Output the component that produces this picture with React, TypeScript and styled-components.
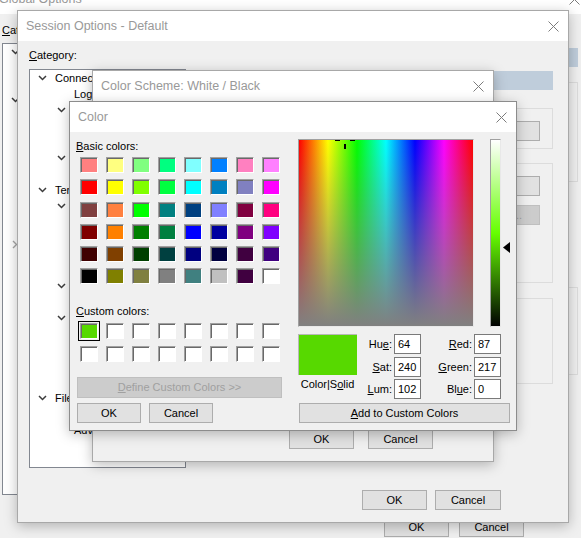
import styled, { createGlobalStyle } from 'styled-components';

const GlobalStyle = createGlobalStyle`
  html, body {
    margin: 0;
    padding: 0;
    background: #f0f0f0;
  }
  body {
    font-family: "Liberation Sans", Arial, sans-serif;
    font-size: 11px;
    color: #000;
  }
  * {
    box-sizing: border-box;
  }
`;

const Desktop = styled.div`
  position: relative;
  width: 581px;
  height: 538px;
  overflow: hidden;
  background: #f0f0f0;
`;

const Window = styled.div<{ $x: number; $y: number; $w: number; $h: number; $active?: boolean }>`
  position: absolute;
  left: ${(p) => p.$x}px;
  top: ${(p) => p.$y}px;
  width: ${(p) => p.$w}px;
  height: ${(p) => p.$h}px;
  display: flex;
  flex-direction: column;
  background: #f0f0f0;
  border: 1px solid ${(p) => (p.$active ? '#8c8c8c' : '#a8a8a8')};
  box-shadow: 0 3px 12px rgba(0, 0, 0, 0.26);
`;

const TitleBar = styled.div`
  flex: none;
  height: 30px;
  display: flex;
  align-items: center;
  justify-content: space-between;
  padding: 0 9px 0 8px;
  background: #fff;
`;

const TitleText = styled.span`
  font-size: 12.5px;
  color: #999;
  white-space: nowrap;
`;

const Key = styled.span`
  text-decoration: underline;
`;

const Button = styled.button<{ $w: number; $h?: number }>`
  width: ${(p) => p.$w}px;
  height: ${(p) => p.$h ?? 20}px;
  flex: none;
  padding: 0;
  border: 1px solid #adadad;
  background: #e1e1e1;
  font: inherit;
  color: #000;
  white-space: nowrap;

  &:disabled {
    background: #cccccc;
    border-color: #bfbfbf;
    color: #a0a0a0;
  }
`;

/* ---------- generic dialog parts ---------- */

const Body = styled.div<{ $pad: string }>`
  flex: 1;
  display: flex;
  flex-direction: column;
  padding: ${(p) => p.$pad};
  min-height: 0;
`;

const Columns = styled.div<{ $gap: number }>`
  flex: 1;
  display: flex;
  gap: ${(p) => p.$gap}px;
  min-height: 0;
`;

const LeftCol = styled.div<{ $w: number }>`
  width: ${(p) => p.$w}px;
  flex: none;
  display: flex;
  flex-direction: column;
`;

const RightCol = styled.div<{ $top: number }>`
  flex: 1;
  display: flex;
  flex-direction: column;
  padding-top: ${(p) => p.$top}px;
  min-width: 0;
`;

const Caption = styled.div`
  height: 14px;
  line-height: 14px;
  white-space: nowrap;
`;

const Footer = styled.div<{ $top: number; $right: number; $gap: number }>`
  flex: none;
  display: flex;
  justify-content: flex-end;
  gap: ${(p) => p.$gap}px;
  margin-top: ${(p) => p.$top}px;
  padding-right: ${(p) => p.$right}px;
`;

const Filler = styled.div`
  flex: 1;
`;

/* ---------- tree view ---------- */

const TreeBox = styled.div<{ $h: number; $top: number; $shift?: number }>`
  height: ${(p) => p.$h}px;
  margin-top: ${(p) => p.$top}px;
  background: #fff;
  border: 1px solid #828790;
  padding-left: ${(p) => p.$shift ?? 0}px;
  overflow: hidden;
`;

const TreeRow = styled.div<{ $level: number }>`
  height: 16px;
  display: flex;
  align-items: center;
  padding-left: ${(p) => p.$level * 19}px;
  white-space: nowrap;
`;

const Toggle = styled.span`
  width: 24px;
  margin-right: 1px;
  flex: none;
  display: flex;
  align-items: center;
  justify-content: center;
`;

const PanelBar = styled.div`
  height: 19px;
  flex: none;
  background: #bfcddb;
  padding-left: 6px;
  line-height: 19px;
  font-weight: bold;
  color: #1e2b3a;
  white-space: nowrap;
  overflow: hidden;
`;

const GroupBox = styled.div<{ $h: number; $top: number }>`
  height: ${(p) => p.$h}px;
  margin-top: ${(p) => p.$top}px;
  flex: none;
  border: 1px solid #dcdcdc;
  padding: 12px 12px 0 0;
  display: flex;
  flex-direction: column;
  align-items: flex-end;
  gap: 9px;
`;

/* ---------- color dialog ---------- */

const ColorBody = styled.div`
  flex: 1;
  display: flex;
  padding: 7px 6px 0 0;
`;

const LeftPane = styled.div`
  width: 228px;
  flex: none;
  padding-left: 7px;
  display: flex;
  flex-direction: column;
`;

const PaneLabel = styled(Caption)<{ $top?: number }>`
  margin-top: ${(p) => p.$top ?? 0}px;
  margin-left: -1px;
`;

const SwatchGrid = styled.div<{ $rowGap: number; $top: number }>`
  display: grid;
  grid-template-columns: repeat(8, 18px);
  grid-auto-rows: 16px;
  column-gap: 8px;
  row-gap: ${(p) => p.$rowGap}px;
  margin: ${(p) => p.$top}px 0 0 3px;
`;

const Swatch = styled.div<{ $c: string; $selected?: boolean }>`
  background: ${(p) => p.$c};
  border: 1px solid;
  border-color: #a0a0a0 #ffffff #ffffff #a0a0a0;
  box-shadow: inset 1px 1px 0 #696969;
  ${(p) => (p.$selected ? 'outline: 1px solid #000; outline-offset: 1px;' : '')}
`;

const ButtonRow = styled.div<{ $top: number }>`
  display: flex;
  gap: 8px;
  margin-top: ${(p) => p.$top}px;
`;

const RightPane = styled.div`
  width: 212px;
  flex: none;
  display: flex;
  flex-direction: column;
`;

const PickerRow = styled.div`
  display: flex;
  gap: 16px;
  height: 188px;
`;

const Spectrum = styled.div`
  position: relative;
  width: 176px;
  height: 188px;
  border: 1px solid;
  border-color: #a0a0a0 #e8e8e8 #e8e8e8 #a0a0a0;
  overflow: hidden;
  background:
    linear-gradient(to bottom, rgba(128, 128, 128, 0), #808080),
    linear-gradient(to right, #ff0000, #ffff00, #00ff00, #00ffff, #0000ff, #ff00ff, #ff0000);
`;

const Cross = styled.svg`
  position: absolute;
`;

const LumWrap = styled.div`
  position: relative;
  width: 11px;
`;

const LumBar = styled.div<{ $mid: string }>`
  width: 11px;
  height: 188px;
  border: 1px solid;
  border-color: #a0a0a0 #e8e8e8 #e8e8e8 #a0a0a0;
  background: linear-gradient(to bottom, #ffffff, ${(p) => p.$mid}, #000000);
`;

const LumArrow = styled.svg`
  position: absolute;
  left: 13px;
`;

const InfoRow = styled.div`
  display: flex;
  margin-top: 7px;
`;

const PreviewCol = styled.div`
  width: 59px;
  flex: none;
  display: flex;
  flex-direction: column;
  align-items: center;
`;

const Preview = styled.div<{ $c: string }>`
  width: 59px;
  height: 41px;
  background: ${(p) => p.$c};
  border-top: 1px solid #b8b8b8;
  border-left: 1px solid #b8b8b8;
`;

const PreviewLabel = styled(Caption)`
  margin-top: 2px;
`;

const FieldGrid = styled.div`
  display: grid;
  grid-template-columns: 35px 27px 49px 27px;
  grid-auto-rows: 20px;
  column-gap: 2px;
  row-gap: 2.5px;
`;

const FieldLabel = styled.label`
  align-self: center;
  text-align: right;
  white-space: nowrap;
`;

const Field = styled.input`
  width: 27px;
  height: 20px;
  border: 1px solid #7a7a7a;
  background: #fff;
  padding: 0 0 0 3px;
  font: inherit;
  color: #000;
  outline: none;
`;

const WideButton = styled(Button)`
  margin: 4px 0 0 1px;
`;

/* ---------- data ---------- */

const basicColors = [
  ['#ff8080', '#ffff80', '#80ff80', '#00ff80', '#80ffff', '#0080ff', '#ff80c0', '#ff80ff'],
  ['#ff0000', '#ffff00', '#80ff00', '#00ff40', '#00ffff', '#0080c0', '#8080c0', '#ff00ff'],
  ['#804040', '#ff8040', '#00ff00', '#008080', '#004080', '#8080ff', '#800040', '#ff0080'],
  ['#800000', '#ff8000', '#008000', '#008040', '#0000ff', '#0000a0', '#800080', '#8000ff'],
  ['#400000', '#804000', '#004000', '#004040', '#000080', '#000040', '#400040', '#400080'],
  ['#000000', '#808000', '#808040', '#808080', '#408080', '#c0c0c0', '#400040', '#ffffff'],
].flat();

const customColors = ['#57d900', ...Array(15).fill('#ffffff')];

type Node = { level: number; kind: 'open' | 'leaf' | 'closed'; text: string };

const sessionTree: Node[] = [
  { level: 0, kind: 'open', text: 'Connection' },
  { level: 1, kind: 'leaf', text: 'Logon Actions' },
  { level: 1, kind: 'open', text: 'SSH2' },
  { level: 2, kind: 'leaf', text: 'SFTP Session' },
  { level: 2, kind: 'leaf', text: 'Advanced' },
  { level: 1, kind: 'open', text: 'Port Forwarding' },
  { level: 2, kind: 'leaf', text: 'Remote/X11' },
  { level: 0, kind: 'open', text: 'Terminal' },
  { level: 1, kind: 'open', text: 'Emulation' },
  { level: 2, kind: 'leaf', text: 'Modes' },
  { level: 2, kind: 'leaf', text: 'Emacs' },
  { level: 2, kind: 'leaf', text: 'Mapped Keys' },
  { level: 2, kind: 'leaf', text: 'Advanced' },
  { level: 1, kind: 'open', text: 'Appearance' },
  { level: 2, kind: 'leaf', text: 'Window' },
  { level: 1, kind: 'open', text: 'Log File' },
  { level: 2, kind: 'leaf', text: 'Advanced' },
  { level: 1, kind: 'leaf', text: 'Printing' },
  { level: 1, kind: 'leaf', text: 'X/Y/Zmodem' },
  { level: 1, kind: 'leaf', text: 'Triggers' },
  { level: 0, kind: 'open', text: 'File Transfer' },
  { level: 1, kind: 'leaf', text: 'FTP/SFTP' },
  { level: 1, kind: 'leaf', text: 'Advanced' },
];

const globalTree: Node[] = [
  { level: 0, kind: 'open', text: 'General' },
  { level: 1, kind: 'leaf', text: 'Default Session' },
  { level: 1, kind: 'leaf', text: 'Edit Default Settings' },
  { level: 0, kind: 'open', text: 'Terminal' },
  { level: 1, kind: 'leaf', text: 'Appearance' },
  { level: 1, kind: 'leaf', text: 'Tabs' },
  { level: 1, kind: 'leaf', text: 'Advanced' },
  { level: 1, kind: 'leaf', text: 'Web Browser' },
  { level: 1, kind: 'leaf', text: 'Log File' },
  { level: 1, kind: 'leaf', text: 'Printing' },
  { level: 1, kind: 'leaf', text: 'Firewall' },
  { level: 1, kind: 'leaf', text: 'Toolbar' },
  { level: 0, kind: 'closed', text: 'SSH2' },
];

const picked = { hue: 64, sat: 240, lum: 102, red: 87, green: 217, blue: 0 };

/* ---------- small drawings ---------- */

const CloseIcon = () => (
  <svg width="11" height="11" viewBox="0 0 11 11">
    <path d="M0.5 0.5 L10.5 10.5 M10.5 0.5 L0.5 10.5" stroke="#7c7c7c" strokeWidth="1" fill="none" />
  </svg>
);

const Chevron = ({ kind }: { kind: Node['kind'] }) => {
  if (kind === 'leaf') return null;
  if (kind === 'closed')
    return (
      <svg width="6" height="9" viewBox="0 0 6 9">
        <path d="M1 1 L4.5 4.5 L1 8" stroke="#a6a6a6" strokeWidth="1.4" fill="none" />
      </svg>
    );
  return (
    <svg width="9" height="6" viewBox="0 0 9 6">
      <path d="M1 1 L4.5 4.5 L8 1" stroke="#3c3c3c" strokeWidth="1.5" fill="none" />
    </svg>
  );
};

const Tree = ({ nodes, h, top, shift }: { nodes: Node[]; h: number; top: number; shift?: number }) => (
  <TreeBox $h={h} $top={top} $shift={shift}>
    {nodes.map((n, i) => (
      <TreeRow key={i} $level={n.level}>
        <Toggle>
          <Chevron kind={n.kind} />
        </Toggle>
        {n.text}
      </TreeRow>
    ))}
  </TreeBox>
);

const Title = ({ text }: { text: string }) => (
  <TitleBar>
    <TitleText>{text}</TitleText>
    <CloseIcon />
  </TitleBar>
);

/* ---------- windows ---------- */

const GlobalOptions = () => (
  <Window $x={-10} $y={-17} $w={600} $h={567}>
    <Title text="Global Options" />
    <Body $pad="9px 11px 12px 11px">
      <Columns $gap={12}>
        <LeftCol $w={175}>
          <Caption>
            <Key>C</Key>ategory:
          </Caption>
          <Tree nodes={globalTree} h={452} top={6} shift={-2} />
        </LeftCol>
        <RightCol $top={25}>
          <PanelBar>General</PanelBar>
          <GroupBox $h={100} $top={15} />
          <GroupBox $h={88} $top={105} />
        </RightCol>
      </Columns>
      <Footer $top={22} $right={54} $gap={10}>
        <Button $w={65}>OK</Button>
        <Button $w={65}>Cancel</Button>
      </Footer>
    </Body>
  </Window>
);

const SessionOptions = () => (
  <Window $x={17} $y={10} $w={552} $h={513}>
    <Title text="Session Options - Default" />
    <Body $pad="7px 15px 12px 11px">
      <Columns $gap={11}>
        <LeftCol $w={157}>
          <Caption>
            <Key>C</Key>ategory:
          </Caption>
          <Tree nodes={sessionTree} h={399} top={7} />
        </LeftCol>
        <RightCol $top={23}>
          <PanelBar>Window and Text Appearance</PanelBar>
          <GroupBox $h={41} $top={18}>
            <Button $w={80}>Edit...</Button>
          </GroupBox>
          <GroupBox $h={120} $top={14}>
            <Button $w={80}>Font...</Button>
            <Button $w={80} disabled>
              Narrow...
            </Button>
          </GroupBox>
          <GroupBox $h={86} $top={15} />
        </RightCol>
      </Columns>
      <Footer $top={22} $right={52} $gap={8}>
        <Button $w={65}>OK</Button>
        <Button $w={66}>Cancel</Button>
      </Footer>
    </Body>
  </Window>
);

const ColorScheme = () => (
  <Window $x={92} $y={70} $w={402} $h={392}>
    <Title text="Color Scheme: White / Black" />
    <Body $pad="0 60px 12px 0">
      <Filler />
      <Footer $top={0} $right={0} $gap={14}>
        <Button $w={65}>OK</Button>
        <Button $w={65}>Cancel</Button>
      </Footer>
    </Body>
  </Window>
);

const ColorDialog = () => {
  const crossX = Math.round((picked.hue / 240) * 174) - 10;
  const crossY = Math.round(((240 - picked.sat) / 240) * 186) - 10;
  const arrowY = Math.round(((240 - picked.lum) / 240) * 188) - 5;
  const current = `rgb(${picked.red}, ${picked.green}, ${picked.blue})`;
  const pure = `hsl(${Math.round((picked.hue / 240) * 360)}, 100%, 50%)`;

  return (
    <Window $x={69} $y={101} $w={448} $h={330} $active>
      <Title text="Color" />
      <ColorBody>
        <LeftPane>
          <PaneLabel>
            <Key>B</Key>asic colors:
          </PaneLabel>
          <SwatchGrid $rowGap={6.3} $top={4}>
            {basicColors.map((c, i) => (
              <Swatch key={i} $c={c} />
            ))}
          </SwatchGrid>
          <PaneLabel $top={19.5}>
            <Key>C</Key>ustom colors:
          </PaneLabel>
          <SwatchGrid $rowGap={6.7} $top={5}>
            {customColors.map((c, i) => (
              <Swatch key={i} $c={c} $selected={i === 0} />
            ))}
          </SwatchGrid>
          <ButtonRow $top={15.3}>
            <Button $w={205} $h={21} disabled>
              <Key>D</Key>efine Custom Colors &gt;&gt;
            </Button>
          </ButtonRow>
          <ButtonRow $top={5}>
            <Button $w={64}>OK</Button>
            <Button $w={64}>Cancel</Button>
          </ButtonRow>
        </LeftPane>
        <RightPane>
          <PickerRow>
            <Spectrum>
              <Cross width="20" height="20" viewBox="0 0 20 20" style={{ left: crossX, top: crossY }}>
                <path d="M0 9h5v2H0z M15 9h5v2h-5z M9 0h2v5H9z M9 14h2v5H9z" fill="#000" />
              </Cross>
            </Spectrum>
            <LumWrap>
              <LumBar $mid={pure} />
              <LumArrow width="7" height="11" viewBox="0 0 7 11" style={{ top: arrowY }}>
                <path d="M7 0 L0 5.5 L7 11 Z" fill="#000" />
              </LumArrow>
            </LumWrap>
          </PickerRow>
          <InfoRow>
            <PreviewCol>
              <Preview $c={current} />
              <PreviewLabel>
                Color|S<Key>o</Key>lid
              </PreviewLabel>
            </PreviewCol>
            <FieldGrid>
              <FieldLabel>
                Hu<Key>e</Key>:
              </FieldLabel>
              <Field readOnly value={picked.hue} />
              <FieldLabel>
                <Key>R</Key>ed:
              </FieldLabel>
              <Field readOnly value={picked.red} />
              <FieldLabel>
                <Key>S</Key>at:
              </FieldLabel>
              <Field readOnly value={picked.sat} />
              <FieldLabel>
                <Key>G</Key>reen:
              </FieldLabel>
              <Field readOnly value={picked.green} />
              <FieldLabel>
                <Key>L</Key>um:
              </FieldLabel>
              <Field readOnly value={picked.lum} />
              <FieldLabel>
                Bl<Key>u</Key>e:
              </FieldLabel>
              <Field readOnly value={picked.blue} />
            </FieldGrid>
          </InfoRow>
          <WideButton $w={211}>
            <Key>A</Key>dd to Custom Colors
          </WideButton>
        </RightPane>
      </ColorBody>
    </Window>
  );
};

const App = () => (
  <>
    <GlobalStyle />
    <Desktop>
      <GlobalOptions />
      <SessionOptions />
      <ColorScheme />
      <ColorDialog />
    </Desktop>
  </>
);

export default App;
